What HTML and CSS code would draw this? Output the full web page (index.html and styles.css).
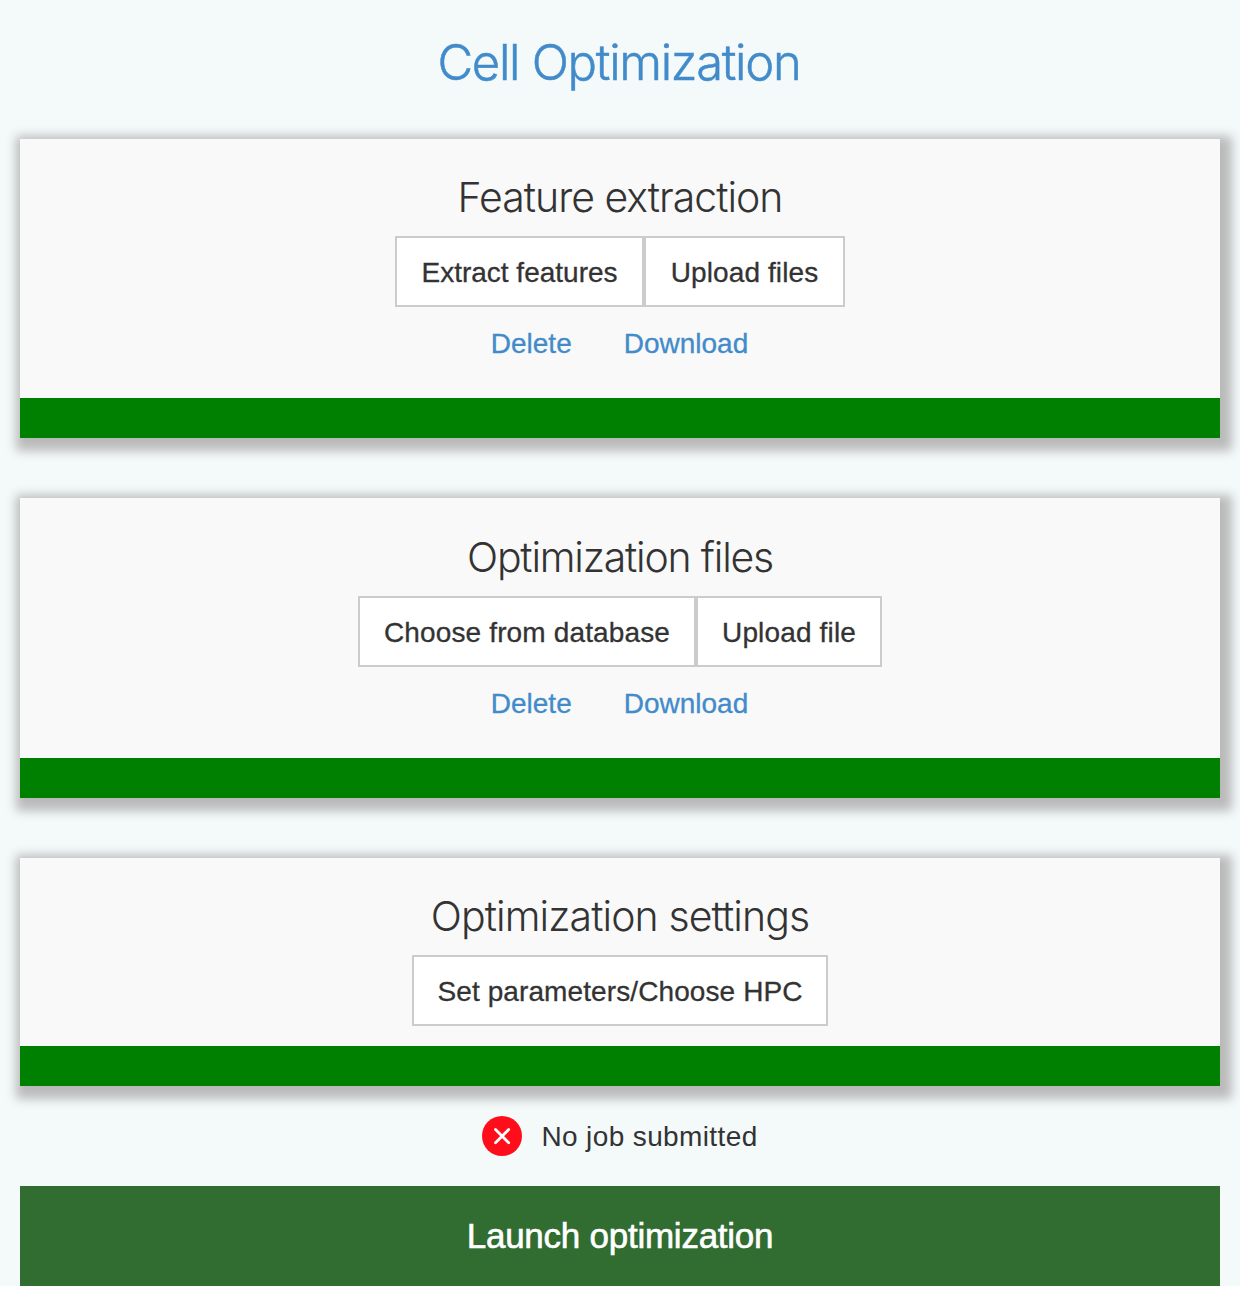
FILE: index.html
```html
<!DOCTYPE html>
<html lang="en">
<head>
<meta charset="utf-8">
<title>Cell Optimization</title>
<link rel="stylesheet" href="styles.css">
</head>
<body>
<main class="page">
  <h1 class="page-title">Cell Optimization</h1>

  <section class="panel">
    <h2 class="panel-title">Feature extraction</h2>
    <div class="buttons">
      <button class="btn btn-extract">Extract features</button>
      <button class="btn btn-files">Upload files</button>
    </div>
    <div class="links"><a href="#">Delete</a><a href="#">Download</a></div>
    <div class="status-bar"></div>
  </section>

  <section class="panel panel-files">
    <h2 class="panel-title">Optimization files</h2>
    <div class="buttons">
      <button class="btn btn-database">Choose from database</button>
      <button class="btn btn-file">Upload file</button>
    </div>
    <div class="links"><a href="#">Delete</a><a href="#">Download</a></div>
    <div class="status-bar"></div>
  </section>

  <section class="panel panel-settings">
    <h2 class="panel-title">Optimization settings</h2>
    <div class="buttons">
      <button class="btn btn-params">Set parameters/Choose HPC</button>
    </div>
    <div class="status-bar"></div>
  </section>

  <div class="job">
    <svg class="job-icon" viewBox="0 0 40 40" width="40" height="40" aria-hidden="true">
      <circle cx="20" cy="20" r="20" fill="#ff0d1b"/>
      <path d="M13.5 13.5 26.7 26.7M26.7 13.5 13.5 26.7" stroke="#fff" stroke-width="2.8" stroke-linecap="round"/>
    </svg>
    <span class="job-text">No job submitted</span>
  </div>

  <button class="launch">Launch optimization</button>
</main>
</body>
</html>
```
FILE: styles.css
```css
* { box-sizing: border-box; }

body {
  margin: 0;
  background: #fff;
  color: #333;
  font: 28px/40px "Liberation Sans", Arial, sans-serif;
}

.page {
  height: 1286px;
  padding: 0 20px;
  overflow: hidden;
  background: #f4fafa;
}

.page-title {
  height: 139px;
  margin: 0;
  padding: 33px 2px 0 0;
  color: #428bca;
  font: 300 49px/60px Inter, sans-serif;
  text-align: center;
  letter-spacing: -1.3px;
  -webkit-text-stroke: 0.5px;
}

.panel {
  display: flex;
  flex-direction: column;
  align-items: center;
  height: 299px;
  margin-bottom: 60px;
  padding-top: 33px;
  background: #f9f9f9;
  box-shadow: 4px 5px 10px 8px #bababa;
}

.panel-title {
  height: 64px;
  margin: 0;
  font: 300 41px/50px Inter, sans-serif;
  letter-spacing: -1px;
}

.panel-files { height: 300px; padding-top: 34px; }
.panel-files .panel-title { letter-spacing: -1.2px; }

.panel-settings { height: 228px; margin-bottom: 30px; }
.panel-settings .panel-title { letter-spacing: -0.9px; }

.buttons { display: flex; }

.btn {
  height: 71px;
  padding: 2px 0 0;
  border: 2px solid #ccc;
  border-radius: 0;
  background: #fff;
  color: #333;
  font: inherit;
  white-space: nowrap;
  -webkit-text-stroke: 0.3px;
}

.btn-extract { width: 249px; }
.btn-files { width: 201px; letter-spacing: 0.1px; }
.btn-database { width: 338px; letter-spacing: 0.14px; }
.btn-file { width: 186px; letter-spacing: 0.15px; }
.btn-params { width: 416px; letter-spacing: 0.1px; }

.links {
  display: flex;
  gap: 52px;
  margin-top: 17px;
  padding-right: 1px;
}

.links a {
  color: #428bca;
  text-decoration: none;
  -webkit-text-stroke: 0.3px;
}

.status-bar {
  width: 100%;
  height: 40px;
  margin-top: auto;
  background: #008000;
}

.job {
  display: flex;
  justify-content: center;
  gap: 20px;
  height: 70px;
}

.job-text {
  padding-top: 1px;
  letter-spacing: 0.38px;
  margin-left: -1px;
}

.launch {
  display: block;
  width: 100%;
  height: 100px;
  padding: 0;
  border: 0;
  background: #316c31;
  color: #fff;
  font: 35px/40px "Liberation Sans", Arial, sans-serif;
  letter-spacing: -0.25px;
  -webkit-text-stroke: 0.6px #fff;
}
```
